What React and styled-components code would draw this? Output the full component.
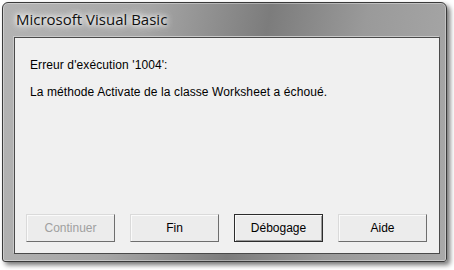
import styled, { createGlobalStyle } from 'styled-components';

const GlobalStyle = createGlobalStyle`
  html, body {
    margin: 0;
    padding: 0;
    background: #ffffff;
  }
  body {
    width: 454px;
    height: 270px;
    overflow: hidden;
  }
`;

const Page = styled.div`
  padding: 2px 0 0 2px;
`;

const Frame = styled.div`
  width: 445px;
  height: 260px;
  box-sizing: border-box;
  border: 1px solid #3a3a3a;
  border-radius: 6px 6px 3px 3px;
  background: linear-gradient(100deg, #b4b4b4 0%, #a6a6a6 30%, #7c7c7c 55%, #9a9a9a 75%, #a9a9a9 100%);
  box-shadow: 3px 3px 5px rgba(0, 0, 0, 0.55), inset 0 0 0 1px rgba(255, 255, 255, 0.35);
  display: flex;
  flex-direction: column;
  padding: 0 6px 7px 11px;
`;

const TitleBar = styled.div`
  height: 34px;
  display: flex;
  align-items: center;
  padding-left: 2px;
`;

const Title = styled.span`
  font-family: "Segoe UI", "Open Sans", "Noto Sans", sans-serif;
  font-size: 15px;
  color: #111;
  text-shadow: 0 0 8px #fff, 0 0 8px #fff, 0 0 4px #fff;
  margin-top: -2px;
`;

const Client = styled.div`
  flex: 1;
  background: #f0f0f0;
  border: 1px solid #4a4a4a;
  box-shadow: -1px -1px 0 #c8c8c8;
  display: flex;
  flex-direction: column;
  padding: 20px 14px 11px 11px;
  font-family: "Liberation Sans", Arial, sans-serif;
  font-size: 12px;
  letter-spacing: 0.1px;
  color: #000;
`;

const Message = styled.p`
  margin: 0 0 ${(p) => p.$gap || 0}px;
  padding-left: 4px;
  line-height: 14px;
`;

const ButtonRow = styled.div`
  margin-top: auto;
  display: flex;
  gap: 15px;
`;

const Button = styled.button`
  flex: none;
  width: 89px;
  height: 28px;
  box-sizing: border-box;
  font-family: "Liberation Sans", Arial, sans-serif;
  font-size: 12px;
  color: ${(p) => (p.disabled ? '#a0a0a0' : '#000')};
  background: #ececec;
  border: 1px solid;
  border-color: ${(p) =>
    p.$primary ? '#2c2c2c' : '#dadada #6e6e6e #6e6e6e #dadada'};
  box-shadow: ${(p) =>
    p.$primary ? 'inset 1px 1px 0 #fafafa, inset -1px -1px 0 #9a9a9a' : 'inset 1px 1px 0 #fafafa'};
  padding: 0;
`;

export default function App() {
  return (
    <>
      <GlobalStyle />
      <Page>
        <Frame>
          <TitleBar>
            <Title>Microsoft Visual Basic</Title>
          </TitleBar>
          <Client>
            <Message $gap={13}>Erreur d'exécution '1004':</Message>
            <Message>La méthode Activate de la classe Worksheet a échoué.</Message>
            <ButtonRow>
              <Button disabled>Continuer</Button>
              <Button>Fin</Button>
              <Button $primary>Débogage</Button>
              <Button>Aide</Button>
            </ButtonRow>
          </Client>
        </Frame>
      </Page>
    </>
  );
}
